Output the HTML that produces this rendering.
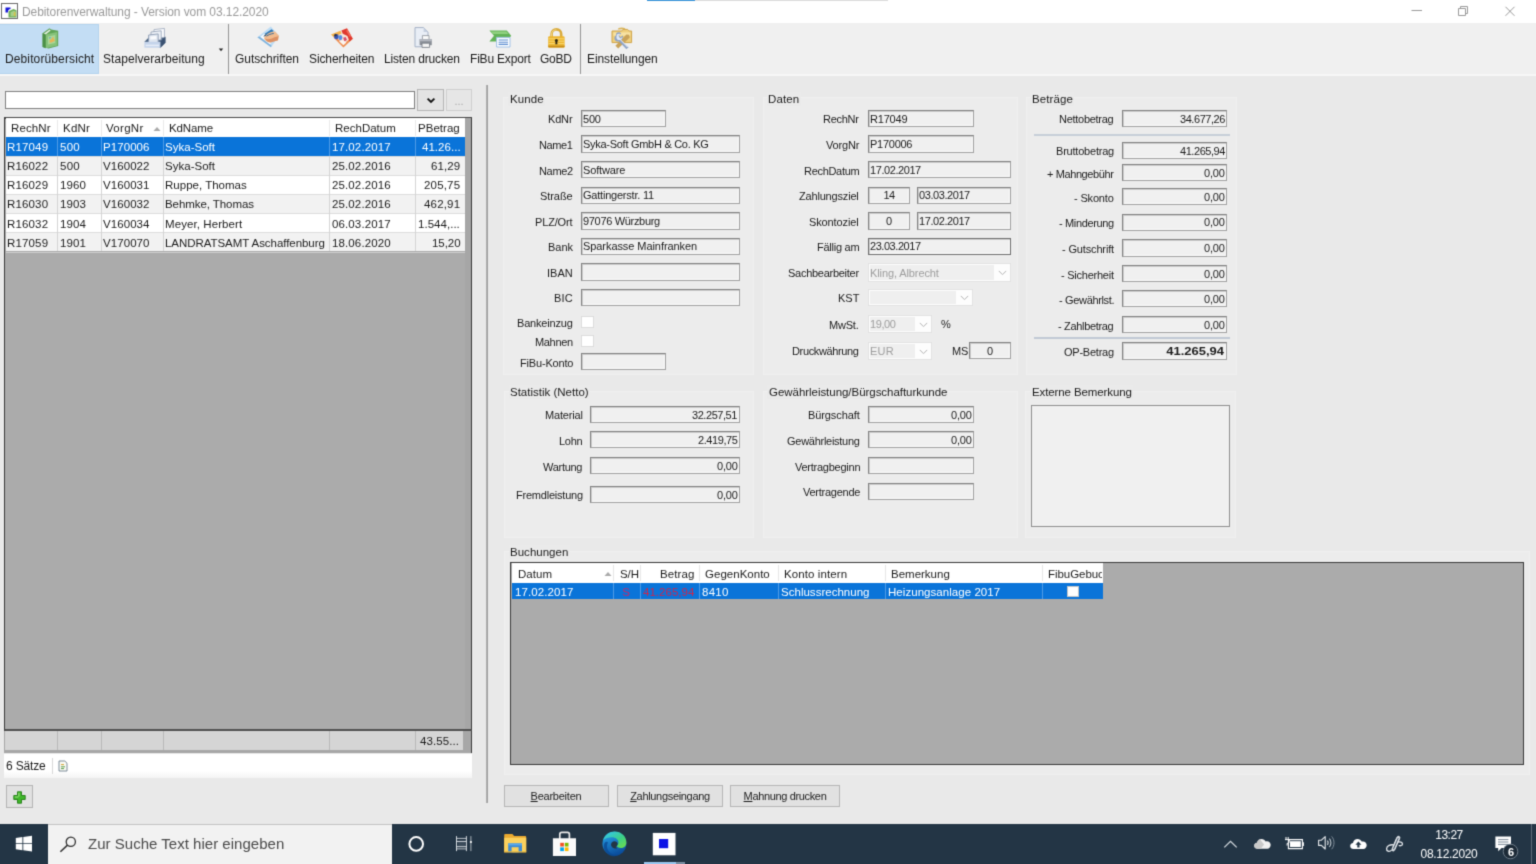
<!DOCTYPE html>
<html lang="de"><head><meta charset="utf-8"><title>Debitorenverwaltung</title>
<style>
html,body{margin:0;padding:0;background:#e9e9e9;overflow:hidden}
body{width:1536px;height:864px;font-family:"Liberation Sans",sans-serif}
#root{filter:url(#soft);box-shadow:0 0 0 4px #e9e9e9;position:relative;width:1536px;height:864px;background:#e9e9e9}
#root div,#root svg{position:absolute;box-sizing:border-box}
.t{will-change:transform;white-space:nowrap;color:#1b1b1b;font-size:11px}
.t span{display:inline-block}
.ui{font-size:12px;color:#1a1a1a}
.ttl{font-size:12px;color:#9a9a9a}
.lg{font-size:11.5px;color:#1b1b1b}
.gh{font-size:11.5px;color:#1b1b1b}
.gc{font-size:11.5px;color:#1b1b1b}
.gs{font-size:11.5px;color:#fff}
.lb{font-size:11px;color:#1b1b1b}
.iv{font-size:11px;color:#1b1b1b}
.dis{font-size:11px;color:#9d9d9d}
.inp{background:#f0f0f0;border:1px solid;border-color:#828282 #a0a0a0 #a0a0a0 #828282;box-shadow:inset 1px 1px 0 #cdcdcd,inset -1px -1px 0 #fafafa}
.cmb{background:#fdfdfd;border:1px solid #e2e2e2}
.cmb i{position:absolute;left:1px;top:1px;bottom:1px;background:#efefef}
.btn{background:#e1e1e1;border:1px solid #b6b6b6}
.grp{border:1px solid #f0f0f0;background:#ececec}
.tb{font-size:15px;color:#4a4a4a}
.tk{font-size:12px;color:#fff}
u{text-decoration:underline}
.bold{font-weight:bold}

</style></head>
<body>
<svg width="0" height="0" style="position:absolute"><defs><filter id="soft" filterUnits="userSpaceOnUse" x="-3" y="-3" width="1542" height="870" color-interpolation-filters="sRGB"><feConvolveMatrix order="3" kernelMatrix="0.02 0.11 0.02 0.11 0.48 0.11 0.02 0.11 0.02" edgeMode="duplicate" preserveAlpha="true"/></filter></defs></svg>
<div id="root">
<div style="left:-3px;top:-3px;width:1542px;height:26px;background:#fff"></div>
<div style="left:647px;top:-3px;width:48px;height:4px;background:#3a94d8"></div>
<div style="left:695px;top:-3px;width:193px;height:4px;background:#dcdcdc"></div>
<svg style="left:1px;top:3px;" width="17" height="16" viewBox="0 0 17 16"><rect x="0.5" y="0.5" width="16" height="15" fill="#fff" stroke="#6a6a6a"/><path d="M4.5 4.5h5v1.5c-1.8 0-2.6 1.2-2.6 3.6h-2.4z" fill="#1414d8"/><path d="M7.5 8.2l5-2.2 3 1.2v7.3h-8z" fill="#6fae5a"/><path d="M9.5 9.2l3.2-1.4 2 0.8v4.6h-5.2z" fill="#a8d08a"/><path d="M12.8 9.2h1.6v3.8h-1.6z" fill="#d8c04a"/></svg>
<div class="t ttl" style="top:3.6px;line-height:16px;height:16px;left:21.8px;"><span id="t1" style="letter-spacing:-0.08px">Debitorenverwaltung - Version vom 03.12.2020</span></div>
<svg style="left:1405px;top:0px;" width="120" height="23" viewBox="0 0 120 23"><path d="M6.5 10.5h10.5" stroke="#9a9a9a" stroke-width="1" fill="none"/><path d="M53.5 8.5h7v7h-7z M55.5 8.5v-2h7v7h-2" stroke="#9a9a9a" stroke-width="1" fill="none"/><path d="M100.5 6.8l9 9 M109.5 6.8l-9 9" stroke="#9a9a9a" stroke-width="1" fill="none"/></svg>
<div style="left:-3px;top:23px;width:1542px;height:51px;background:#f0f0f0"></div>
<div style="left:-3px;top:73.5px;width:1542px;height:2px;background:#f7f7f7"></div>
<div style="left:-3px;top:24px;width:102px;height:49.5px;background:#c3ddf4;border:1px solid #b4d3ee"></div>
<div style="left:228px;top:24px;width:1.2px;height:50px;background:#949494"></div>
<div style="left:579.5px;top:24px;width:1.2px;height:50px;background:#949494"></div>
<div class="t ui" style="top:50.6px;line-height:16px;height:16px;left:4.7px;"><span id="t2" style="letter-spacing:0.12px">Debitorübersicht</span></div>
<div class="t ui" style="top:50.6px;line-height:16px;height:16px;left:103.2px;"><span id="t3" style="letter-spacing:0.06px">Stapelverarbeitung</span></div>
<div class="t ui" style="top:50.6px;line-height:16px;height:16px;left:235.2px;"><span id="t4" style="letter-spacing:-0.06px">Gutschriften</span></div>
<div class="t ui" style="top:50.6px;line-height:16px;height:16px;left:309.2px;"><span id="t5" style="letter-spacing:-0.11px">Sicherheiten</span></div>
<div class="t ui" style="top:50.6px;line-height:16px;height:16px;left:384.2px;"><span id="t6" style="letter-spacing:-0.16px">Listen drucken</span></div>
<div class="t ui" style="top:50.6px;line-height:16px;height:16px;left:470px;"><span id="t7" style="letter-spacing:-0.19px">FiBu Export</span></div>
<div class="t ui" style="top:50.6px;line-height:16px;height:16px;left:540.2px;"><span id="t8" style="letter-spacing:-0.22px">GoBD</span></div>
<div class="t ui" style="top:50.6px;line-height:16px;height:16px;left:587px;"><span id="t9" style="letter-spacing:-0.11px">Einstellungen</span></div>
<svg style="left:217.8px;top:47.6px;" width="6" height="4" viewBox="0 0 6 4"><path d="M0.8 0.6h4.4l-2.2 2.6z" fill="#222"/></svg>
<svg style="left:41px;top:27px;" width="19" height="23" viewBox="0 0 19 23"><path d="M1.6 6.2l6.8-5 1.8 1.4 7 1.2v15.2l-9.6 2.6-6-1.6z" fill="#5fa456"/><path d="M2.8 6.8l5.8-4.2 1 0.9-5 3.9z" fill="#e9f2e4"/><path d="M4.6 7.6l11.6-2.6v13.6l-11.6 2.6z" fill="#86c27a"/><path d="M1.6 6.2l3 1.4v13.6l-3-1.2z" fill="#4b8f46"/><path d="M7 9.6l7.2-1.7v8l-7.2 1.7z" fill="#a9d79a"/><path d="M8.6 12.8l2-.5.8-2 1.4-.3-.2 2.2 1.2.2v1.6l-3.4 1.6-1.8.1z" fill="#e7b458"/><path d="M8 10.4l1.6-.4v1.2l-1.6.4z" fill="#5c9fc4"/></svg>
<svg style="left:143px;top:27px;" width="24" height="22" viewBox="0 0 24 22"><path d="M1.4 14.8l4.600-4.600h16.400v5.600l-5 4.900z" fill="#4c6483"/><path d="M11 2.600l10.400-1.200v9l-10.400 1.200z" fill="#fbfcfe" stroke="#9aa7bb" stroke-width="0.800"/><path d="M8 5l10.200-1.200v9l-10.200 1.200z" fill="#eef2f8" stroke="#8f9db3" stroke-width="0.800"/><path d="M5.600 8l9.600-1.100v8.400l-9.600 1.100z" fill="#dfe6f0" stroke="#8493ab" stroke-width="0.800"/><path d="M7.400 9.600l6-.700v3l-6 .700z" fill="#fafbfd"/><path d="M17.400 14.800l5-5.200v6.200l-5 4.900z" fill="#3a5272"/><path d="M1.400 14.800h16v5.900h-16z" fill="#c4d3ea"/><path d="M2.600 17.600h13.400v1.600h-13.400z" fill="#e6edf8"/></svg>
<svg style="left:256px;top:25px;" width="24" height="23" viewBox="0 0 24 23"><path d="M1.400 12.200l13.400-10.600 8.200 9.400-8 11.200z" fill="#bcdcf5"/><path d="M4.200 12l10.200-7.800 5.600 6.600-6.200 8.600z" fill="#f7fbff"/><path d="M1.400 12.200l13.600 10 .600-1.400-12.200-9.400z" fill="#7fb2dc"/><path d="M8.600 8.800l6.800-4.600 2.400 1.800-6.600 5z" fill="#2f7ab8"/><path d="M7.400 11.800l1.800-2.600 2 1.400z" fill="#1d4566"/><path d="M8 13.200c1-2.600 3.600-4.800 7-6.200l4-.600 4 4.400-1 4.400-7.600 2.200c-2.800 0-5.600-1.800-6.400-4.200z" fill="#f1bb8e"/><path d="M9 13.600c2.600 1 6 .600 9.600-1.400l3.800-1-.400 4-7.600 2.200c-2.400 0-4.600-1.600-5.400-3.800z" fill="#dc9164"/><path d="M10.400 11.200c2-1.400 4.600-2.400 7.400-2.800" stroke="#2a6496" stroke-width="0.900" fill="none"/></svg>
<svg style="left:331px;top:26px;" width="24" height="23" viewBox="0 0 24 23"><path d="M0 8.600l16-6.400 5.800 10.600-9.400 8.700z" fill="#f7e6da"/><path d="M2.600 11.600l9.800 9.900 9.400-8.700-1.200-1.800-8.200 7.400-7.600-7.600z" fill="#ee8d50"/><path d="M0 8.600l9.400-3.800 1.200 2.800-8 3.600z" fill="#f4b24a"/><path d="M10.400 4.400l5.600-2.200 5.800 10.600-3.200 2.800-2.200-5.600-4.600-2.200z" fill="#e0392f"/><path d="M15 4.600l1.600-.600 3.400 6-1.200 1z" fill="#f06a58"/><ellipse cx="5.400" cy="10.600" rx="2.300" ry="2.700" fill="#3556b8"/><ellipse cx="9.400" cy="11.600" rx="2" ry="2.600" fill="#5b8de0"/><path d="M2.600 9.200l2-1.400 1.600 1.200-1.400 1.600z" fill="#30343c"/><path d="M12.200 11.800l2.400-.800 1.400 2.800-2.600 2z" fill="#d84a6a"/><path d="M8 15.200l4.400 4 3-2.800-2.800-1.800z" fill="#fbf5f0"/></svg>
<svg style="left:413px;top:26px;" width="21" height="23" viewBox="0 0 21 23"><path d="M2 1.6h8.6l4.4 4.4v14.8h-13z" fill="#e9eef6" stroke="#a4b1c6" stroke-width="1"/><path d="M10.6 1.6v4.4h4.4z" fill="#c5cfdf"/><path d="M9.4 9.6h6.6v4.4h-6.6z" fill="#fafafa" stroke="#8a8f98" stroke-width="0.8"/><path d="M6.6 13.2h12.2v6h-12.2z" fill="#8b9098"/><path d="M6.6 13.2h12.2v2h-12.2z" fill="#b4b8c0"/><path d="M9 17.2h7.6v4.2h-7.6z" fill="#f4f4f4" stroke="#70757d" stroke-width="0.8"/></svg>
<svg style="left:488px;top:29px;" width="25" height="19" viewBox="0 0 25 19"><path d="M1.4 1.6h17.4l4.4 5.2-4.4 5.6h-17.4l4.6-5.6z" fill="#62b257"/><path d="M2.6 2.4h15.8l2.2 2.6h-15.8z" fill="#8fd07f"/><path d="M8.6 8.4h13.4v9.6h-13.4z" fill="#fdfeff" stroke="#9fc0e6" stroke-width="1"/><path d="M10.6 11h9.4M10.6 13.2h9.4M10.6 15.4h9.4" stroke="#5f8fd2" stroke-width="1.1"/></svg>
<svg style="left:546px;top:27px;" width="21" height="22" viewBox="0 0 21 22"><path d="M5.6 10.4v-3.4c0-2.8 2-4.6 4.8-4.6s4.8 1.8 4.8 4.6v3.4" fill="none" stroke="#d9ab3c" stroke-width="2.6"/><path d="M5.6 10v-3c0-2.600 2-4.200 4.800-4.200" fill="none" stroke="#f3d684" stroke-width="1"/><rect x="2.2" y="9.200" width="16.400" height="11.400" rx="1.200" fill="#edb52e"/><path d="M2.600 11.800h15.600M2.600 14.200h15.600M2.600 16.600h15.600M2.600 19h15.600" stroke="#f8d873" stroke-width="1"/><path d="M2.200 18.600h16.400v1c0 .600-.600 1-1.200 1h-14c-.600 0-1.200-.400-1.200-1z" fill="#c98c12"/><circle cx="10.400" cy="13.600" r="1.500" fill="#2c2410"/><path d="M9.700 14h1.400l.400 3.200h-2.200z" fill="#2c2410"/></svg>
<svg style="left:610px;top:26px;" width="24" height="23" viewBox="0 0 24 23"><path d="M8.6 3.600c0-1.600 6.200-1.600 6.200 0" fill="none" stroke="#d9b45a" stroke-width="1.600"/><path d="M2 5h9.600l1.400-1.600h4.600l1.600 1.600h2.400v11.600h-19.600z" fill="#efcf7c" stroke="#d0a54a" stroke-width="1"/><path d="M3.400 6.400h16.800v3.400h-16.800z" fill="#f7e2a4"/><path d="M5.400 19.800l11-11.400 2.600.400.800 2.600-11.600 11z" fill="#c9a35a"/><path d="M6.200 7.200c1.600-1.400 4-1 5 .400l-2.200 1.800 1.400 1.800 2.400-1.600c.600 1.800-.200 3.800-2 4.400l7.800 7.200-2.200 2-7.400-7.800c-2 .600-3.800-.400-4.400-2.200-.400-1.600.200-3.200 1.600-4z" fill="#8fa3c4"/><path d="M7 8.400c1-.800 2.400-.800 3.200-.200l-1.800 1.600 1.800 2.600 2.200-1.400c0 1.200-.600 2.200-1.600 2.600l7.200 6.800-.800.800-7-7.200c-1.600.400-3-.200-3.600-1.600-.400-1.400 0-2.800.400-4z" fill="#dfe8f6"/></svg>
<div style="left:5px;top:91.2px;width:410px;height:17.4px;background:#fff;border:1px solid #7f7f7f"></div>
<div style="left:417px;top:88.8px;width:27px;height:22.2px;background:#e3e3e3;border:1px solid #b5b5b5"></div>
<svg style="left:425.5px;top:96.5px;" width="10" height="7" viewBox="0 0 10 7"><path d="M1.6 1.6l3.4 3.4 3.4-3.4" stroke="#111" stroke-width="1.9" fill="none"/></svg>
<div style="left:446px;top:88.8px;width:26px;height:22.2px;background:#e6e6e6;border:1px solid #cfcfcf"></div>
<div class="t lb" style="top:92.5px;line-height:16px;height:16px;left:259px;width:400px;text-align:center;color:#a8a8a8"><span id="t10">...</span></div>
<div style="left:485.7px;top:85px;width:2.3px;height:718.3px;background:linear-gradient(90deg,#b4b4b4,#9a9a9a)"></div>
<div style="left:4.1px;top:116.8px;width:467.9px;height:614px;background:#ababab;border:1px solid #3a3a3a;border-top:2px solid #484848;border-bottom:2px solid #505050"></div>
<div style="left:465.4px;top:118.2px;width:5.2px;height:611px;background:#a6a6a6"></div>
<div style="left:4.3px;top:730.8px;width:467.7px;height:22.4px;background:#a7a7a7;border-right:1.5px solid #3a3a3a"></div>
<div style="left:6px;top:118.4px;width:458.5px;height:18.8px;background:#fff"></div>
<div class="t gh" style="top:120.3px;line-height:16px;height:16px;left:11.1px;"><span id="t11" style="letter-spacing:0.1px">RechNr</span></div>
<div class="t gh" style="top:120.3px;line-height:16px;height:16px;left:62.6px;"><span id="t12" style="letter-spacing:0.25px">KdNr</span></div>
<div class="t gh" style="top:120.3px;line-height:16px;height:16px;left:106.2px;"><span id="t13" style="letter-spacing:0.3px">VorgNr</span></div>
<div class="t gh" style="top:120.3px;line-height:16px;height:16px;left:168.9px;"><span id="t14" style="letter-spacing:-0.11px">KdName</span></div>
<div class="t gh" style="top:120.3px;line-height:16px;height:16px;left:335.2px;"><span id="t15" style="letter-spacing:0.01px">RechDatum</span></div>
<div class="t gh" style="top:120.3px;line-height:16px;height:16px;left:418px;"><span id="t16" style="letter-spacing:0.03px">PBetrag</span></div>
<svg style="left:152.5px;top:125.5px;" width="8" height="6" viewBox="0 0 8 6"><path d="M0.5 5l3.5-4 3.5 4z" fill="#a9a9a9"/></svg>
<div style="left:56.5px;top:119.5px;width:1px;height:16.5px;background:#e9e9e9"></div>
<div style="left:100.9px;top:119.5px;width:1px;height:16.5px;background:#e9e9e9"></div>
<div style="left:162.5px;top:119.5px;width:1px;height:16.5px;background:#e9e9e9"></div>
<div style="left:329.3px;top:119.5px;width:1px;height:16.5px;background:#e9e9e9"></div>
<div style="left:414.7px;top:119.5px;width:1px;height:16.5px;background:#e9e9e9"></div>
<div style="left:6px;top:137.2px;width:458.5px;height:19.05px;background:#0a74d9"></div>
<div style="left:56.5px;top:137.2px;width:1px;height:19.05px;background:#4f9be6"></div>
<div style="left:100.9px;top:137.2px;width:1px;height:19.05px;background:#4f9be6"></div>
<div style="left:162.5px;top:137.2px;width:1px;height:19.05px;background:#4f9be6"></div>
<div style="left:329.3px;top:137.2px;width:1px;height:19.05px;background:#4f9be6"></div>
<div style="left:414.7px;top:137.2px;width:1px;height:19.05px;background:#4f9be6"></div>
<div class="t gs" style="top:139.32px;line-height:16px;height:16px;left:7px;"><span id="t17" style="letter-spacing:0.15px">R17049</span></div>
<div class="t gs" style="top:139.32px;line-height:16px;height:16px;left:59.5px;"><span id="t18" style="letter-spacing:0.27px">500</span></div>
<div class="t gs" style="top:139.32px;line-height:16px;height:16px;left:103.2px;"><span id="t19" style="letter-spacing:0.07px">P170006</span></div>
<div class="t gs" style="top:139.32px;line-height:16px;height:16px;left:165.4px;"><span id="t20" style="letter-spacing:0.02px">Syka-Soft</span></div>
<div class="t gs" style="top:139.32px;line-height:16px;height:16px;left:332px;"><span id="t21" style="letter-spacing:0.12px">17.02.2017</span></div>
<div class="t gs" style="top:139.32px;line-height:16px;height:16px;right:1075.7px;"><span id="t22" style="letter-spacing:0.04px">41.26...</span></div>
<div style="left:6px;top:156.25px;width:458.5px;height:19.05px;background:#f2f2f2"></div>
<div style="left:6px;top:156.25px;width:458.5px;height:1px;background:#dcdcdc"></div>
<div style="left:56.5px;top:156.25px;width:1px;height:19.05px;background:#d4d4d4"></div>
<div style="left:100.9px;top:156.25px;width:1px;height:19.05px;background:#d4d4d4"></div>
<div style="left:162.5px;top:156.25px;width:1px;height:19.05px;background:#d4d4d4"></div>
<div style="left:329.3px;top:156.25px;width:1px;height:19.05px;background:#d4d4d4"></div>
<div style="left:414.7px;top:156.25px;width:1px;height:19.05px;background:#d4d4d4"></div>
<div class="t gc" style="top:158.38px;line-height:16px;height:16px;left:7px;"><span id="t23" style="letter-spacing:0.15px">R16022</span></div>
<div class="t gc" style="top:158.38px;line-height:16px;height:16px;left:59.5px;"><span id="t24" style="letter-spacing:0.27px">500</span></div>
<div class="t gc" style="top:158.38px;line-height:16px;height:16px;left:103.2px;"><span id="t25" style="letter-spacing:0.07px">V160022</span></div>
<div class="t gc" style="top:158.38px;line-height:16px;height:16px;left:165.4px;"><span id="t26" style="letter-spacing:0.02px">Syka-Soft</span></div>
<div class="t gc" style="top:158.38px;line-height:16px;height:16px;left:332px;"><span id="t27" style="letter-spacing:0.12px">25.02.2016</span></div>
<div class="t gc" style="top:158.38px;line-height:16px;height:16px;right:1075.7px;"><span id="t28" style="letter-spacing:0.12px">61,29</span></div>
<div style="left:6px;top:175.3px;width:458.5px;height:19.05px;background:#fff"></div>
<div style="left:6px;top:175.3px;width:458.5px;height:1px;background:#dcdcdc"></div>
<div style="left:56.5px;top:175.3px;width:1px;height:19.05px;background:#d4d4d4"></div>
<div style="left:100.9px;top:175.3px;width:1px;height:19.05px;background:#d4d4d4"></div>
<div style="left:162.5px;top:175.3px;width:1px;height:19.05px;background:#d4d4d4"></div>
<div style="left:329.3px;top:175.3px;width:1px;height:19.05px;background:#d4d4d4"></div>
<div style="left:414.7px;top:175.3px;width:1px;height:19.05px;background:#d4d4d4"></div>
<div class="t gc" style="top:177.42px;line-height:16px;height:16px;left:7px;"><span id="t29" style="letter-spacing:0.15px">R16029</span></div>
<div class="t gc" style="top:177.42px;line-height:16px;height:16px;left:59.5px;"><span id="t30" style="letter-spacing:0.1px">1960</span></div>
<div class="t gc" style="top:177.42px;line-height:16px;height:16px;left:103.2px;"><span id="t31" style="letter-spacing:0.07px">V160031</span></div>
<div class="t gc" style="top:177.42px;line-height:16px;height:16px;left:165.4px;"><span id="t32" style="letter-spacing:0.01px">Ruppe, Thomas</span></div>
<div class="t gc" style="top:177.42px;line-height:16px;height:16px;left:332px;"><span id="t33" style="letter-spacing:0.12px">25.02.2016</span></div>
<div class="t gc" style="top:177.42px;line-height:16px;height:16px;right:1075.7px;"><span id="t34" style="letter-spacing:0.17px">205,75</span></div>
<div style="left:6px;top:194.35px;width:458.5px;height:19.05px;background:#f2f2f2"></div>
<div style="left:6px;top:194.35px;width:458.5px;height:1px;background:#dcdcdc"></div>
<div style="left:56.5px;top:194.35px;width:1px;height:19.05px;background:#d4d4d4"></div>
<div style="left:100.9px;top:194.35px;width:1px;height:19.05px;background:#d4d4d4"></div>
<div style="left:162.5px;top:194.35px;width:1px;height:19.05px;background:#d4d4d4"></div>
<div style="left:329.3px;top:194.35px;width:1px;height:19.05px;background:#d4d4d4"></div>
<div style="left:414.7px;top:194.35px;width:1px;height:19.05px;background:#d4d4d4"></div>
<div class="t gc" style="top:196.47px;line-height:16px;height:16px;left:7px;"><span id="t35" style="letter-spacing:0.15px">R16030</span></div>
<div class="t gc" style="top:196.47px;line-height:16px;height:16px;left:59.5px;"><span id="t36" style="letter-spacing:0.1px">1903</span></div>
<div class="t gc" style="top:196.47px;line-height:16px;height:16px;left:103.2px;"><span id="t37" style="letter-spacing:0.07px">V160032</span></div>
<div class="t gc" style="top:196.47px;line-height:16px;height:16px;left:165.4px;"><span id="t38" style="letter-spacing:-0.07px">Behmke, Thomas</span></div>
<div class="t gc" style="top:196.47px;line-height:16px;height:16px;left:332px;"><span id="t39" style="letter-spacing:0.12px">25.02.2016</span></div>
<div class="t gc" style="top:196.47px;line-height:16px;height:16px;right:1075.7px;"><span id="t40" style="letter-spacing:0.17px">462,91</span></div>
<div style="left:6px;top:213.4px;width:458.5px;height:19.05px;background:#fff"></div>
<div style="left:6px;top:213.4px;width:458.5px;height:1px;background:#dcdcdc"></div>
<div style="left:56.5px;top:213.4px;width:1px;height:19.05px;background:#d4d4d4"></div>
<div style="left:100.9px;top:213.4px;width:1px;height:19.05px;background:#d4d4d4"></div>
<div style="left:162.5px;top:213.4px;width:1px;height:19.05px;background:#d4d4d4"></div>
<div style="left:329.3px;top:213.4px;width:1px;height:19.05px;background:#d4d4d4"></div>
<div style="left:414.7px;top:213.4px;width:1px;height:19.05px;background:#d4d4d4"></div>
<div class="t gc" style="top:215.52px;line-height:16px;height:16px;left:7px;"><span id="t41" style="letter-spacing:0.15px">R16032</span></div>
<div class="t gc" style="top:215.52px;line-height:16px;height:16px;left:59.5px;"><span id="t42" style="letter-spacing:0.1px">1904</span></div>
<div class="t gc" style="top:215.52px;line-height:16px;height:16px;left:103.2px;"><span id="t43" style="letter-spacing:0.07px">V160034</span></div>
<div class="t gc" style="top:215.52px;line-height:16px;height:16px;left:165.4px;"><span id="t44" style="letter-spacing:0.08px">Meyer, Herbert</span></div>
<div class="t gc" style="top:215.52px;line-height:16px;height:16px;left:332px;"><span id="t45" style="letter-spacing:0.12px">06.03.2017</span></div>
<div class="t gc" style="top:215.52px;line-height:16px;height:16px;right:1075.7px;"><span id="t46" style="letter-spacing:0.03px">1.544,...</span></div>
<div style="left:6px;top:232.45px;width:458.5px;height:19.05px;background:#f2f2f2"></div>
<div style="left:6px;top:232.45px;width:458.5px;height:1px;background:#dcdcdc"></div>
<div style="left:56.5px;top:232.45px;width:1px;height:19.05px;background:#d4d4d4"></div>
<div style="left:100.9px;top:232.45px;width:1px;height:19.05px;background:#d4d4d4"></div>
<div style="left:162.5px;top:232.45px;width:1px;height:19.05px;background:#d4d4d4"></div>
<div style="left:329.3px;top:232.45px;width:1px;height:19.05px;background:#d4d4d4"></div>
<div style="left:414.7px;top:232.45px;width:1px;height:19.05px;background:#d4d4d4"></div>
<div class="t gc" style="top:234.57px;line-height:16px;height:16px;left:7px;"><span id="t47" style="letter-spacing:0.15px">R17059</span></div>
<div class="t gc" style="top:234.57px;line-height:16px;height:16px;left:59.5px;"><span id="t48" style="letter-spacing:0.1px">1901</span></div>
<div class="t gc" style="top:234.57px;line-height:16px;height:16px;left:103.2px;"><span id="t49" style="letter-spacing:0.07px">V170070</span></div>
<div class="t gc" style="top:234.57px;line-height:16px;height:16px;left:165.4px;"><span id="t50" style="letter-spacing:-0.05px">LANDRATSAMT Aschaffenburg</span></div>
<div class="t gc" style="top:234.57px;line-height:16px;height:16px;left:332px;"><span id="t51" style="letter-spacing:0.12px">18.06.2020</span></div>
<div class="t gc" style="top:234.57px;line-height:16px;height:16px;right:1075.7px;"><span id="t52" style="letter-spacing:-0.04px">15,20</span></div>
<div style="left:6px;top:251.5px;width:458.5px;height:1px;background:#cfcfcf"></div>
<div style="left:4.8px;top:731px;width:458.4px;height:18.9px;background:#d5d5d5"></div>
<div style="left:56.5px;top:731px;width:1px;height:18.9px;background:#b9b9b9"></div>
<div style="left:100.9px;top:731px;width:1px;height:18.9px;background:#b9b9b9"></div>
<div style="left:162.5px;top:731px;width:1px;height:18.9px;background:#b9b9b9"></div>
<div style="left:329.3px;top:731px;width:1px;height:18.9px;background:#b9b9b9"></div>
<div style="left:414.7px;top:731px;width:1px;height:18.9px;background:#b9b9b9"></div>
<div class="t gc" style="top:733.3px;line-height:16px;height:16px;right:1077.2px;"><span id="t53" style="letter-spacing:0.09px">43.55...</span></div>
<div style="left:4px;top:753.5px;width:468px;height:24.5px;background:linear-gradient(#fff 70%,#f4f4f4)"></div>
<div class="t ui" style="top:758px;line-height:16px;height:16px;left:6.2px;"><span id="t54" style="letter-spacing:-0.16px">6 Sätze</span></div>
<div style="left:52px;top:758px;width:1px;height:16px;background:#d8d8d8"></div>
<svg style="left:58px;top:760px;" width="10" height="12" viewBox="0 0 10 12"><path d="M1 1h5.8l2.2 2.2v7.8h-8z" fill="#fbfbf4" stroke="#6d7f8f" stroke-width="0.9"/><path d="M3 6.8h4M3 8.6h3" stroke="#5a9a4a" stroke-width="1"/><path d="M3 4.6h3" stroke="#d0a030" stroke-width="1"/></svg>
<div style="left:6.3px;top:785.3px;width:26.6px;height:22.5px;background:#e1e1e1;border:1px solid #b4b4b4"></div>
<svg style="left:13px;top:791px;" width="13" height="13" viewBox="0 0 13 13"><path d="M4.5 0.8h4v3.7h3.7v4h-3.7v3.7h-4v-3.7h-3.7v-4h3.7z" fill="#3fb62a" stroke="#1f7a12" stroke-width="0.9"/><path d="M5.3 1.8h1.2v3.6h-1.2z M1.8 5.4h3.6v1.1h-3.6z" fill="#9be07f"/></svg>
<div class="grp" style="left:503px;top:96.6px;width:250.5px;height:278.6px;"></div>
<div style="left:508.4px;top:91.8px;width:36.6px;height:14px;background:#eaeaea"></div>
<div class="t lg" style="top:90.8px;line-height:16px;height:16px;left:509.6px;"><span id="t55" style="letter-spacing:0.11px">Kunde</span></div>
<div class="t lb" style="top:111.1px;line-height:16px;height:16px;right:963.4px;"><span id="t56" style="letter-spacing:-0.17px">KdNr</span></div>
<div class="inp" style="left:581px;top:109.9px;width:85.3px;height:16.8px;"></div>
<div class="t iv" style="top:110.6px;line-height:16px;height:16px;left:582.8px;"><span id="t57" style="letter-spacing:-0.19px">500</span></div>
<div class="t lb" style="top:136.75px;line-height:16px;height:16px;right:963.4px;"><span id="t58" style="letter-spacing:-0.37px">Name1</span></div>
<div class="inp" style="left:581px;top:135.3px;width:159px;height:17.3px;"></div>
<div class="t iv" style="top:136.25px;line-height:16px;height:16px;left:582.8px;"><span id="t59" style="letter-spacing:-0.28px">Syka-Soft GmbH &amp; Co. KG</span></div>
<div class="t lb" style="top:162.5px;line-height:16px;height:16px;right:963.4px;"><span id="t60" style="letter-spacing:-0.33px">Name2</span></div>
<div class="inp" style="left:581px;top:161px;width:159px;height:17.4px;"></div>
<div class="t iv" style="top:162px;line-height:16px;height:16px;left:582.8px;"><span id="t61" style="letter-spacing:-0.15px">Software</span></div>
<div class="t lb" style="top:187.9px;line-height:16px;height:16px;right:963.4px;"><span id="t62" style="letter-spacing:-0.07px">Straße</span></div>
<div class="inp" style="left:581px;top:186.5px;width:159px;height:17.2px;"></div>
<div class="t iv" style="top:187.4px;line-height:16px;height:16px;left:582.8px;"><span id="t63" style="letter-spacing:-0.22px">Gattingerstr. 11</span></div>
<div class="t lb" style="top:213.8px;line-height:16px;height:16px;right:963.4px;"><span id="t64" style="letter-spacing:-0.16px">PLZ/Ort</span></div>
<div class="inp" style="left:581px;top:212.4px;width:159px;height:17.2px;"></div>
<div class="t iv" style="top:213.3px;line-height:16px;height:16px;left:582.8px;"><span id="t65" style="letter-spacing:-0.32px">97076 Würzburg</span></div>
<div class="t lb" style="top:238.9px;line-height:16px;height:16px;right:963.4px;"><span id="t66" style="letter-spacing:-0.02px">Bank</span></div>
<div class="inp" style="left:581px;top:237.5px;width:159px;height:17.2px;"></div>
<div class="t iv" style="top:238.4px;line-height:16px;height:16px;left:582.8px;"><span id="t67" style="letter-spacing:-0.07px">Sparkasse Mainfranken</span></div>
<div class="t lb" style="top:264.7px;line-height:16px;height:16px;right:963.4px;"><span id="t68" style="letter-spacing:0.03px">IBAN</span></div>
<div class="inp" style="left:581px;top:263.2px;width:159px;height:17.4px;"></div>
<div class="t lb" style="top:290.4px;line-height:16px;height:16px;right:963.4px;"><span id="t69" style="letter-spacing:0.15px">BIC</span></div>
<div class="inp" style="left:581px;top:289px;width:159px;height:17.2px;"></div>
<div class="t lb" style="top:315px;line-height:16px;height:16px;right:963px;"><span id="t70" style="letter-spacing:-0.19px">Bankeinzug</span></div>
<div style="left:581.3px;top:316.2px;width:12.3px;height:12.3px;background:#fff;border:1px solid #dcdcdc"></div>
<div class="t lb" style="top:334px;line-height:16px;height:16px;right:963px;"><span id="t71" style="letter-spacing:-0.33px">Mahnen</span></div>
<div style="left:581.3px;top:335.2px;width:12.3px;height:12.3px;background:#fff;border:1px solid #dcdcdc"></div>
<div class="t lb" style="top:354.6px;line-height:16px;height:16px;right:962.6px;"><span id="t72" style="letter-spacing:-0.18px">FiBu-Konto</span></div>
<div class="inp" style="left:581px;top:353.1px;width:85.3px;height:17.2px;"></div>
<div class="grp" style="left:763px;top:96.6px;width:255px;height:278.6px;"></div>
<div style="left:767.2px;top:91.8px;width:34px;height:14px;background:#eaeaea"></div>
<div class="t lg" style="top:90.8px;line-height:16px;height:16px;left:768.4px;"><span id="t73" style="letter-spacing:0.1px">Daten</span></div>
<div class="t lb" style="top:111.4px;line-height:16px;height:16px;right:677px;"><span id="t74" style="letter-spacing:-0.28px">RechNr</span></div>
<div class="t lb" style="top:137px;line-height:16px;height:16px;right:677px;"><span id="t75" style="letter-spacing:-0.14px">VorgNr</span></div>
<div class="t lb" style="top:162.6px;line-height:16px;height:16px;right:677px;"><span id="t76" style="letter-spacing:-0.3px">RechDatum</span></div>
<div class="t lb" style="top:188.2px;line-height:16px;height:16px;right:677px;"><span id="t77" style="letter-spacing:-0.18px">Zahlungsziel</span></div>
<div class="t lb" style="top:213.8px;line-height:16px;height:16px;right:677px;"><span id="t78" style="letter-spacing:-0.12px">Skontoziel</span></div>
<div class="t lb" style="top:239.4px;line-height:16px;height:16px;right:677px;"><span id="t79" style="letter-spacing:-0.25px">Fällig am</span></div>
<div class="t lb" style="top:265.2px;line-height:16px;height:16px;right:677px;"><span id="t80" style="letter-spacing:-0.27px">Sachbearbeiter</span></div>
<div class="t lb" style="top:290.4px;line-height:16px;height:16px;right:677px;"><span id="t81" style="letter-spacing:-0px">KST</span></div>
<div class="t lb" style="top:316.6px;line-height:16px;height:16px;right:677px;"><span id="t82" style="letter-spacing:-0.19px">MwSt.</span></div>
<div class="t lb" style="top:342.8px;line-height:16px;height:16px;right:677px;"><span id="t83" style="letter-spacing:-0.36px">Druckwährung</span></div>
<div class="inp" style="left:868px;top:109.9px;width:105.8px;height:16.8px;"></div>
<div class="t iv" style="top:110.6px;line-height:16px;height:16px;left:869.8px;"><span id="t84" style="letter-spacing:-0.19px">R17049</span></div>
<div class="inp" style="left:868px;top:135.3px;width:105.8px;height:17.3px;"></div>
<div class="t iv" style="top:136.25px;line-height:16px;height:16px;left:869.8px;"><span id="t85" style="letter-spacing:-0.26px">P170006</span></div>
<div class="inp" style="left:868px;top:161px;width:143px;height:17.4px;"></div>
<div class="t iv" style="top:162px;line-height:16px;height:16px;left:869.8px;"><span id="t86" style="letter-spacing:-0.43px">17.02.2017</span></div>
<div class="inp" style="left:868px;top:186.5px;width:41.7px;height:17.2px;"></div>
<div class="t iv" style="top:187.4px;line-height:16px;height:16px;left:688.85px;width:400px;text-align:center;"><span id="t87" style="letter-spacing:-0.5px">14</span></div>
<div class="inp" style="left:917.3px;top:186.5px;width:93.7px;height:17.2px;"></div>
<div class="t iv" style="top:187.4px;line-height:16px;height:16px;left:919.1px;"><span id="t88" style="letter-spacing:-0.43px">03.03.2017</span></div>
<div class="inp" style="left:868px;top:212.4px;width:41.7px;height:17.2px;"></div>
<div class="t iv" style="top:213.3px;line-height:16px;height:16px;left:688.85px;width:400px;text-align:center;"><span id="t89">0</span></div>
<div class="inp" style="left:917.3px;top:212.4px;width:93.7px;height:17.2px;"></div>
<div class="t iv" style="top:213.3px;line-height:16px;height:16px;left:919.1px;"><span id="t90" style="letter-spacing:-0.43px">17.02.2017</span></div>
<div class="inp" style="left:868px;top:237.5px;width:143px;height:17.2px;border-color:#6f6f6f;"></div>
<div class="t iv" style="top:238.4px;line-height:16px;height:16px;left:869.8px;"><span id="t91" style="letter-spacing:-0.45px">23.03.2017</span></div>
<div class="cmb" style="left:868.4px;top:263.3px;width:142.2px;height:18.3px;"><i style="width:123.2px"></i></div>
<svg style="left:997.6px;top:269.95px;" width="9" height="6" viewBox="0 0 9 6"><path d="M0.8 0.9l3.7 3.7 3.7-3.7" stroke="#b5b5b5" stroke-width="1" fill="none"/></svg>
<div class="t dis" style="top:264.65px;line-height:16px;height:16px;left:870px;"><span id="t92" style="letter-spacing:-0.1px">Kling, Albrecht</span></div>
<div class="cmb" style="left:868.4px;top:288.6px;width:105px;height:17.2px;"><i style="width:86px"></i></div>
<svg style="left:960.4px;top:294.7px;" width="9" height="6" viewBox="0 0 9 6"><path d="M0.8 0.9l3.7 3.7 3.7-3.7" stroke="#b5b5b5" stroke-width="1" fill="none"/></svg>
<div class="cmb" style="left:868.4px;top:315px;width:63.2px;height:18.4px;"><i style="width:44.2px"></i></div>
<svg style="left:918.6px;top:321.7px;" width="9" height="6" viewBox="0 0 9 6"><path d="M0.8 0.9l3.7 3.7 3.7-3.7" stroke="#b5b5b5" stroke-width="1" fill="none"/></svg>
<div class="t dis" style="top:316.4px;line-height:16px;height:16px;left:870px;"><span id="t93" style="letter-spacing:-0.39px">19,00</span></div>
<div class="t lb" style="top:316.4px;line-height:16px;height:16px;left:941.2px;"><span id="t94">%</span></div>
<div class="cmb" style="left:868.4px;top:342px;width:63.2px;height:18.3px;"><i style="width:44.2px"></i></div>
<svg style="left:918.6px;top:348.65px;" width="9" height="6" viewBox="0 0 9 6"><path d="M0.8 0.9l3.7 3.7 3.7-3.7" stroke="#b5b5b5" stroke-width="1" fill="none"/></svg>
<div class="t dis" style="top:343.35px;line-height:16px;height:16px;left:870px;"><span id="t95" style="letter-spacing:0.26px">EUR</span></div>
<div class="t lb" style="top:343px;line-height:16px;height:16px;left:951.6px;"><span id="t96" style="letter-spacing:-0.15px">MS</span></div>
<div class="inp" style="left:969.4px;top:341.7px;width:41.6px;height:17.2px;"></div>
<div class="t iv" style="top:342.6px;line-height:16px;height:16px;left:790.2px;width:400px;text-align:center;"><span id="t97">0</span></div>
<div class="grp" style="left:1025.6px;top:96.6px;width:211.2px;height:278.6px;"></div>
<div style="left:1030.3px;top:91.8px;width:43.8px;height:14px;background:#eaeaea"></div>
<div class="t lg" style="top:90.8px;line-height:16px;height:16px;left:1031.5px;"><span id="t98" style="letter-spacing:0.1px">Beträge</span></div>
<div class="t lb" style="top:111px;line-height:16px;height:16px;right:422.2px;"><span id="t99" style="letter-spacing:-0.28px">Nettobetrag</span></div>
<div class="inp" style="left:1121.5px;top:109.6px;width:105.7px;height:17.2px;"></div>
<div class="t iv" style="top:110.5px;line-height:16px;height:16px;right:311.4px;"><span id="t100" style="letter-spacing:-0.44px">34.677,26</span></div>
<div class="t lb" style="top:143.1px;line-height:16px;height:16px;right:422.2px;"><span id="t101" style="letter-spacing:-0.21px">Bruttobetrag</span></div>
<div class="inp" style="left:1121.5px;top:141.7px;width:105.7px;height:17.2px;"></div>
<div class="t iv" style="top:142.6px;line-height:16px;height:16px;right:311.4px;"><span id="t102" style="letter-spacing:-0.44px">41.265,94</span></div>
<div class="t lb" style="top:165.6px;line-height:16px;height:16px;right:422.2px;"><span id="t103" style="letter-spacing:-0.4px">+ Mahngebühr</span></div>
<div class="inp" style="left:1121.5px;top:164.2px;width:105.7px;height:17.2px;"></div>
<div class="t iv" style="top:165.1px;line-height:16px;height:16px;right:311.4px;"><span id="t104" style="letter-spacing:-0.2px">0,00</span></div>
<div class="t lb" style="top:189.7px;line-height:16px;height:16px;right:422.2px;"><span id="t105" style="letter-spacing:-0.17px">- Skonto</span></div>
<div class="inp" style="left:1121.5px;top:188.3px;width:105.7px;height:17.2px;"></div>
<div class="t iv" style="top:189.2px;line-height:16px;height:16px;right:311.4px;"><span id="t106" style="letter-spacing:-0.2px">0,00</span></div>
<div class="t lb" style="top:214.9px;line-height:16px;height:16px;right:422.2px;"><span id="t107" style="letter-spacing:-0.35px">- Minderung</span></div>
<div class="inp" style="left:1121.5px;top:213.6px;width:105.7px;height:17px;"></div>
<div class="t iv" style="top:214.4px;line-height:16px;height:16px;right:311.4px;"><span id="t108" style="letter-spacing:-0.2px">0,00</span></div>
<div class="t lb" style="top:240.8px;line-height:16px;height:16px;right:422.2px;"><span id="t109" style="letter-spacing:-0.15px">- Gutschrift</span></div>
<div class="inp" style="left:1121.5px;top:239.3px;width:105.7px;height:17.4px;"></div>
<div class="t iv" style="top:240.3px;line-height:16px;height:16px;right:311.4px;"><span id="t110" style="letter-spacing:-0.2px">0,00</span></div>
<div class="t lb" style="top:266.65px;line-height:16px;height:16px;right:422.2px;"><span id="t111" style="letter-spacing:-0.24px">- Sicherheit</span></div>
<div class="inp" style="left:1121.5px;top:265.2px;width:105.7px;height:17.3px;"></div>
<div class="t iv" style="top:266.15px;line-height:16px;height:16px;right:311.4px;"><span id="t112" style="letter-spacing:-0.2px">0,00</span></div>
<div class="t lb" style="top:291.7px;line-height:16px;height:16px;right:422.2px;"><span id="t113" style="letter-spacing:-0.34px">- Gewährlst.</span></div>
<div class="inp" style="left:1121.5px;top:290.3px;width:105.7px;height:17.2px;"></div>
<div class="t iv" style="top:291.2px;line-height:16px;height:16px;right:311.4px;"><span id="t114" style="letter-spacing:-0.2px">0,00</span></div>
<div class="t lb" style="top:317.65px;line-height:16px;height:16px;right:422.2px;"><span id="t115" style="letter-spacing:-0.33px">- Zahlbetrag</span></div>
<div class="inp" style="left:1121.5px;top:316.2px;width:105.7px;height:17.3px;"></div>
<div class="t iv" style="top:317.15px;line-height:16px;height:16px;right:311.4px;"><span id="t116" style="letter-spacing:-0.2px">0,00</span></div>
<div class="t lb" style="top:343.5px;line-height:16px;height:16px;right:422.2px;"><span id="t117" style="letter-spacing:-0.24px">OP-Betrag</span></div>
<div class="inp" style="left:1121.5px;top:341.7px;width:105.7px;height:18px;"></div>
<div class="t iv bold" style="top:343px;line-height:16px;height:16px;right:311.6px;transform:scaleX(1.18);transform-origin:right center;"><span id="t118">41.265,94</span></div>
<div style="left:1034px;top:133.7px;width:195.8px;height:2px;background:#c6ced8"></div>
<div style="left:1034px;top:336.6px;width:195.8px;height:2px;background:#c0c9d4"></div>
<div class="grp" style="left:503.6px;top:391.2px;width:250.4px;height:146.6px;"></div>
<div style="left:508.6px;top:385.2px;width:81.4px;height:14px;background:#eaeaea"></div>
<div class="t lg" style="top:384.2px;line-height:16px;height:16px;left:509.8px;"><span id="t119" style="letter-spacing:-0px">Statistik (Netto)</span></div>
<div class="t lb" style="top:407.35px;line-height:16px;height:16px;right:953.6px;"><span id="t120" style="letter-spacing:-0.17px">Material</span></div>
<div class="inp" style="left:590.4px;top:406.1px;width:149.4px;height:16.9px;"></div>
<div class="t iv" style="top:406.85px;line-height:16px;height:16px;right:798.8px;"><span id="t121" style="letter-spacing:-0.44px">32.257,51</span></div>
<div class="t lb" style="top:432.65px;line-height:16px;height:16px;right:953.6px;"><span id="t122" style="letter-spacing:-0.27px">Lohn</span></div>
<div class="inp" style="left:590.4px;top:431.3px;width:149.4px;height:17.1px;"></div>
<div class="t iv" style="top:432.15px;line-height:16px;height:16px;right:798.8px;"><span id="t123" style="letter-spacing:-0.43px">2.419,75</span></div>
<div class="t lb" style="top:458.55px;line-height:16px;height:16px;right:953.6px;"><span id="t124" style="letter-spacing:-0.28px">Wartung</span></div>
<div class="inp" style="left:590.4px;top:457.3px;width:149.4px;height:16.9px;"></div>
<div class="t iv" style="top:458.05px;line-height:16px;height:16px;right:798.8px;"><span id="t125" style="letter-spacing:-0.2px">0,00</span></div>
<div class="t lb" style="top:487.15px;line-height:16px;height:16px;right:953.6px;"><span id="t126" style="letter-spacing:-0.22px">Fremdleistung</span></div>
<div class="inp" style="left:590.4px;top:485.9px;width:149.4px;height:16.9px;"></div>
<div class="t iv" style="top:486.65px;line-height:16px;height:16px;right:798.8px;"><span id="t127" style="letter-spacing:-0.2px">0,00</span></div>
<div class="grp" style="left:763.4px;top:391.2px;width:254.6px;height:146.6px;"></div>
<div style="left:767.4px;top:385.2px;width:181px;height:14px;background:#eaeaea"></div>
<div class="t lg" style="top:384.2px;line-height:16px;height:16px;left:768.6px;"><span id="t128" style="letter-spacing:-0.04px">Gewährleistung/Bürgschafturkunde</span></div>
<div class="t lb" style="top:407.35px;line-height:16px;height:16px;right:676px;"><span id="t129" style="letter-spacing:-0.1px">Bürgschaft</span></div>
<div class="inp" style="left:868.2px;top:406.1px;width:105.6px;height:16.9px;"></div>
<div class="t iv" style="top:406.85px;line-height:16px;height:16px;right:564.8px;"><span id="t130" style="letter-spacing:-0.2px">0,00</span></div>
<div class="t lb" style="top:432.65px;line-height:16px;height:16px;right:676px;"><span id="t131" style="letter-spacing:-0.27px">Gewährleistung</span></div>
<div class="inp" style="left:868.2px;top:431.3px;width:105.6px;height:17.1px;"></div>
<div class="t iv" style="top:432.15px;line-height:16px;height:16px;right:564.8px;"><span id="t132" style="letter-spacing:-0.2px">0,00</span></div>
<div class="t lb" style="top:458.55px;line-height:16px;height:16px;right:676px;"><span id="t133" style="letter-spacing:-0.25px">Vertragbeginn</span></div>
<div class="inp" style="left:868.2px;top:457.3px;width:105.6px;height:16.9px;"></div>
<div class="t lb" style="top:483.85px;line-height:16px;height:16px;right:676px;"><span id="t134" style="letter-spacing:-0.25px">Vertragende</span></div>
<div class="inp" style="left:868.2px;top:482.5px;width:105.6px;height:17.1px;"></div>
<div class="grp" style="left:1025.4px;top:391.2px;width:210.8px;height:146.6px;"></div>
<div style="left:1030.3px;top:385.2px;width:102.6px;height:14px;background:#eaeaea"></div>
<div class="t lg" style="top:384.2px;line-height:16px;height:16px;left:1031.5px;"><span id="t135" style="letter-spacing:-0.11px">Externe Bemerkung</span></div>
<div style="left:1031.3px;top:405px;width:198.8px;height:122px;background:#f0f0f0;border:1px solid #8e8e8e"></div>
<div class="grp" style="left:503.6px;top:550.6px;width:1026.4px;height:224.6px;"></div>
<div style="left:508.6px;top:544.6px;width:61.2px;height:14px;background:#eaeaea"></div>
<div class="t lg" style="top:543.6px;line-height:16px;height:16px;left:509.8px;"><span id="t136" style="letter-spacing:0.02px">Buchungen</span></div>
<div style="left:510.2px;top:561.6px;width:1013.8px;height:203.8px;background:#ababab;border:1.3px solid #3a3a3a"></div>
<div style="left:511.5px;top:562.9px;width:591.1px;height:20.2px;background:#fff"></div>
<div style="left:511.5px;top:583px;width:591.1px;height:16.2px;background:#0a74d9"></div>
<div style="left:613.1px;top:564.5px;width:1px;height:16.5px;background:#e6e6e6"></div>
<div style="left:613.1px;top:583px;width:1px;height:16.2px;background:#4f9be6"></div>
<div style="left:639.7px;top:564.5px;width:1px;height:16.5px;background:#e6e6e6"></div>
<div style="left:639.7px;top:583px;width:1px;height:16.2px;background:#4f9be6"></div>
<div style="left:698.6px;top:564.5px;width:1px;height:16.5px;background:#e6e6e6"></div>
<div style="left:698.6px;top:583px;width:1px;height:16.2px;background:#4f9be6"></div>
<div style="left:777.8px;top:564.5px;width:1px;height:16.5px;background:#e6e6e6"></div>
<div style="left:777.8px;top:583px;width:1px;height:16.2px;background:#4f9be6"></div>
<div style="left:885.3px;top:564.5px;width:1px;height:16.5px;background:#e6e6e6"></div>
<div style="left:885.3px;top:583px;width:1px;height:16.2px;background:#4f9be6"></div>
<div style="left:1041.9px;top:564.5px;width:1px;height:16.5px;background:#e6e6e6"></div>
<div style="left:1041.9px;top:583px;width:1px;height:16.2px;background:#4f9be6"></div>
<div class="t gh" style="top:565.6px;line-height:16px;height:16px;left:517.7px;"><span id="t137" style="letter-spacing:0.07px">Datum</span></div>
<svg style="left:603.8px;top:571px;" width="8" height="6" viewBox="0 0 8 6"><path d="M0.5 5l3.5-4 3.5 4z" fill="#a9a9a9"/></svg>
<div class="t gh" style="top:565.6px;line-height:16px;height:16px;left:619.6px;"><span id="t138" style="letter-spacing:-0.06px">S/H</span></div>
<div class="t gh" style="top:565.6px;line-height:16px;height:16px;right:841.8px;"><span id="t139" style="letter-spacing:0.09px">Betrag</span></div>
<div class="t gh" style="top:565.6px;line-height:16px;height:16px;left:705.2px;"><span id="t140" style="letter-spacing:0.02px">GegenKonto</span></div>
<div class="t gh" style="top:565.6px;line-height:16px;height:16px;left:784.2px;"><span id="t141" style="letter-spacing:0.1px">Konto intern</span></div>
<div class="t gh" style="top:565.6px;line-height:16px;height:16px;left:891.2px;"><span id="t142" style="letter-spacing:-0px">Bemerkung</span></div>
<div style="left:1044px;top:563.2px;width:57.6px;height:19.2px;overflow:hidden"><div class="t gh" style="left:4.3px;top:2.4px;line-height:16px;height:16px"><span style="letter-spacing:-0.05px">FibuGebuc</span></div></div>
<div class="t gs" style="top:583.6px;line-height:16px;height:16px;left:514.6px;"><span id="t143" style="letter-spacing:0.1px">17.02.2017</span></div>
<div class="t gs" style="top:583.6px;line-height:16px;height:16px;left:426.2px;width:400px;text-align:center;color:#c22a6a"><span id="t144">S</span></div>
<div class="t gs" style="top:583.6px;line-height:16px;height:16px;right:841.8px;color:#c8284f"><span id="t145" style="letter-spacing:0.03px">41.265,94</span></div>
<div class="t gs" style="top:583.6px;line-height:16px;height:16px;left:701.9px;"><span id="t146" style="letter-spacing:0.25px">8410</span></div>
<div class="t gs" style="top:583.6px;line-height:16px;height:16px;left:780.9px;"><span id="t147" style="letter-spacing:0.02px">Schlussrechnung</span></div>
<div class="t gs" style="top:583.6px;line-height:16px;height:16px;left:888px;"><span id="t148" style="letter-spacing:0.05px">Heizungsanlage 2017</span></div>
<div style="left:1066.5px;top:585.8px;width:12.2px;height:11.2px;background:#fff;border:1px solid #c6c6c6"></div>
<div class="btn" style="left:503.8px;top:785px;width:105px;height:21.8px;"></div>
<div class="t lb" style="top:787.5px;line-height:16px;height:16px;left:356.3px;width:400px;text-align:center;"><span id="t149" style="letter-spacing:-0.24px"><u>B</u>earbeiten</span></div>
<div class="btn" style="left:617px;top:785px;width:105.6px;height:21.8px;"></div>
<div class="t lb" style="top:787.5px;line-height:16px;height:16px;left:469.8px;width:400px;text-align:center;"><span id="t150" style="letter-spacing:-0.32px"><u>Z</u>ahlungseingang</span></div>
<div class="btn" style="left:730.4px;top:785px;width:109.6px;height:21.8px;"></div>
<div class="t lb" style="top:787.5px;line-height:16px;height:16px;left:585.2px;width:400px;text-align:center;"><span id="t151" style="letter-spacing:-0.35px"><u>M</u>ahnung drucken</span></div>
<div style="left:-3px;top:824px;width:1542px;height:43px;background:#233545"></div>
<div style="left:48px;top:824px;width:344px;height:43px;background:#f2f2f2;border-top:1px solid #c4c4c4"></div>
<svg style="left:15px;top:835px;" width="18" height="18" viewBox="0 0 18 18"><path d="M0.8 3.1l6.6-1v6.1h-6.6z M8.3 2l8.7-1.300v7.500h-8.700z M0.800 9.100h6.600v6.100l-6.600-1z M8.300 9.100h8.700v7.500l-8.700-1.300z" fill="#fff"/></svg>
<svg style="left:58px;top:834px;" width="22" height="20" viewBox="0 0 22 20"><circle cx="12.800" cy="7.700" r="4.600" fill="none" stroke="#2e2e2e" stroke-width="1.300"/><path d="M9.500 11.100l-7.100 6.600" stroke="#2e2e2e" stroke-width="1.500" fill="none"/></svg>
<div class="t tb" style="top:834.3px;line-height:20px;height:20px;left:87.6px;"><span id="t152" style="letter-spacing:0.02px">Zur Suche Text hier eingeben</span></div>
<svg style="left:406px;top:834px;" width="20" height="20" viewBox="0 0 20 20"><circle cx="10.200" cy="9.900" r="6.800" fill="none" stroke="#fff" stroke-width="2"/></svg>
<svg style="left:454px;top:834px;" width="20" height="19" viewBox="0 0 20 19"><path d="M4 7.500h7v5.100h-7z" fill="#3b4b5a"/><path d="M2.500 2.100v15 M12.400 2.100v15" stroke="#e8ecef" stroke-width="0.900"/><path d="M2.500 4.400h9.900 M2.500 14.900h9.900" stroke="#dde2e6" stroke-width="0.800"/><path d="M2.500 7.400h9.900 M2.500 12.700h9.900" stroke="#e8ecef" stroke-width="0.900"/><path d="M16.900 2.100v15" stroke="#c9d0d6" stroke-width="0.800"/><circle cx="16.900" cy="8" r="1.100" fill="#fff"/></svg>
<svg style="left:503px;top:833px;" width="25" height="21" viewBox="0 0 25 21"><path d="M1.200 2.200c0-.800.500-1.300 1.200-1.300h7l1.800 2h10.800c.800 0 1.200.500 1.200 1.200v15.100h-22z" fill="#eaa92f"/><path d="M1.200 4.800h22v14.400h-22z" fill="#fbd15d"/><path d="M5.200 10.400h13.800v8.800h-13.800z" fill="#3d8bd4"/><path d="M5.200 10.400h13.800v2h-13.800z" fill="#5aa9ea"/><path d="M8.600 14.200h7v5h-7z" fill="#fbd15d"/><path d="M1.200 18.200h22v1h-22z" fill="#e9b73e"/></svg>
<svg style="left:551px;top:831px;" width="27" height="26" viewBox="0 0 27 26"><path d="M8.800 8v-4.600c0-1.200.800-2 2-2h5.600c1.200 0 2 .800 2 2v4.600" fill="none" stroke="#e9e9e9" stroke-width="1.700"/><path d="M1.900 7.200h23.100v17.700h-23.100z" fill="#fafafa"/><path d="M9.200 11.800h3.700v3.700h-3.700z" fill="#f25022"/><path d="M13.800 11.800h3.700v3.700h-3.700z" fill="#7fba00"/><path d="M9.200 16.400h3.700v3.700h-3.700z" fill="#00a4ef"/><path d="M13.800 16.400h3.700v3.700h-3.700z" fill="#ffb900"/></svg>
<svg style="left:601px;top:831px;" width="27" height="26" viewBox="0 0 27 26"><defs><linearGradient id="eg1" x1="0.200" y1="0" x2="1" y2="0.900"><stop offset="0" stop-color="#35c6e8"/><stop offset="0.550" stop-color="#3ccf86"/><stop offset="1" stop-color="#6ddc4e"/></linearGradient><linearGradient id="eg2" x1="0" y1="0" x2="0.400" y2="1"><stop offset="0" stop-color="#2aa9ee"/><stop offset="1" stop-color="#0b4f9e"/></linearGradient></defs><circle cx="13.400" cy="12.700" r="12" fill="url(#eg2)"/><path d="M2.200 9.200c1.600-5.400 6.200-8.600 11.400-8.600 6.800 0 11.800 5 11.800 10.800 0 3.600-2.600 5.600-5.600 5.600-2.400 0-4-.900-4.200-2.400 1.200-.600 1.800-1.800 1.800-3.200 0-3-3-5.200-6.400-5.200-3.800 0-7 1.200-8.800 3z" fill="url(#eg1)"/><path d="M10.800 11.400c1.400-1.200 3.400-1.400 4.800-.400 1.200.900 1.400 2.400.600 3.400-.500.700-1.200.900-1 1.800.100.500.500.900 1.200 1.200-2.200.600-4.600-.200-5.800-2-.800-1.300-.700-2.900.200-4z" fill="#233545"/><path d="M7 11.400c-2.400 4-.600 9.600 4.400 11.800 2.800 1.200 6 .800 8.400-.600-2.800 3-8 3.600-12 1.200-4.200-2.600-5.800-7.400-4.400-11.600 1-1.400 2.400-1.800 3.600-.800z" fill="#0a4a94" opacity="0.800"/></svg>
<svg style="left:652px;top:832px;" width="25" height="24" viewBox="0 0 25 24"><path d="M0.800 0.900h22.700v22.400h-22.700z" fill="#fff"/><path d="M7 7h9.200v9.200h-9.200z" fill="#0a12e6"/></svg>
<div style="left:644.3px;top:861.6px;width:31.3px;height:6px;background:#9cc7ee"></div>
<div style="left:676.4px;top:861.6px;width:8.4px;height:6px;background:#7b8fa3"></div>
<svg style="left:1222px;top:838px;" width="17" height="12" viewBox="0 0 17 12"><path d="M2.300 9.400l6.200-6 6.200 6" stroke="#d5dbe0" stroke-width="1.200" fill="none"/></svg>
<svg style="left:1253px;top:836px;" width="20" height="15" viewBox="0 0 20 15"><path d="M4.600 12.800c-2 0-3.400-1.300-3.400-3 0-1.600 1.200-2.900 2.800-3 .400-2.300 2.300-3.900 4.600-3.900 1.800 0 3.300 1 4.100 2.500.400-.150.800-.200 1.300-.200 2 0 3.600 1.600 3.700 3.600 0 2.200-1.400 4-3.400 4z" fill="#f1f1f1"/><path d="M4.600 12.800c-2 0-3.400-1.300-3.400-3 0-1.600 1.200-2.900 2.800-3 .300-1.700 1.400-3 2.900-3.600l4.200 5.400-3.400 4.200z" fill="#c9c9c9"/></svg>
<svg style="left:1285px;top:836px;" width="20" height="15" viewBox="0 0 20 15"><path d="M3.400 3.600h14v9h-14z" fill="none" stroke="#fff" stroke-width="1.100"/><path d="M5 5.200h10.800v5.800h-10.800z" fill="#fff"/><path d="M17.600 6.200h1.300v3.800h-1.300z" fill="#fff"/><path d="M1 1v2.600M3.200 1v2.600M0 3.600h4.200v2c0 1.400-1 1.800-2.100 1.800v2.200" stroke="#fff" stroke-width="1" fill="none"/></svg>
<svg style="left:1317px;top:833px;" width="20" height="20" viewBox="0 0 20 20"><path d="M1.600 7.200h2.800l3.800-3.600v12.400l-3.800-3.600h-2.800z" fill="none" stroke="#e6e9ec" stroke-width="1.100" stroke-linejoin="round"/><path d="M10.400 7.600c.900.900.900 3.300 0 4.300" stroke="#e6e9ec" stroke-width="1.100" fill="none"/><path d="M12.400 5.600c2 2.200 2 6.200 0 8.400" stroke="#c0c8cf" stroke-width="1.100" fill="none"/><path d="M14.600 3.400c3.200 3.400 3.200 9.400 0 12.800" stroke="#7f8d99" stroke-width="1" fill="none"/></svg>
<svg style="left:1349px;top:836px;" width="20" height="15" viewBox="0 0 20 15"><path d="M4.600 13c-2 0-3.400-1.300-3.400-3 0-1.600 1.200-2.900 2.800-3 .400-2.300 2.300-3.900 4.600-3.900 1.800 0 3.300 1 4.100 2.500.400-.150.800-.200 1.300-.200 2 0 3.600 1.600 3.700 3.600 0 2.200-1.400 4-3.400 4z" fill="#fff"/><path d="M9.400 5.600l3 3.200h-1.900v2.800h-2.200v-2.800h-1.900z" fill="#233545"/></svg>
<svg style="left:1385px;top:835px;" width="20" height="19" viewBox="0 0 20 19"><path d="M13 1.400c1.300-.400 2.200.700 1.700 2l-4.900 11.300c-.600 1.400-2.400 1.800-2.800.500-.200-.800.200-1.700.600-2.700l3.900-9.300c.300-.900.800-1.500 1.500-1.800z" fill="#c9d2da" stroke="#eef1f4" stroke-width="1"/><path d="M13.200 3.200l-4.800 11" stroke="#233545" stroke-width="0.800" fill="none"/><path d="M8.600 9.900c-3-.600-6.600.800-7 3.600-.300 2.600 2.700 3.900 5 1.600" fill="none" stroke="#e4e8ec" stroke-width="1.300"/><path d="M12.600 7.200c2.400-.800 4.900.200 4.900 1.800 0 1.400-1.900 2.100-3.800 1.500" fill="none" stroke="#e4e8ec" stroke-width="1.300"/></svg>
<div class="t tk" style="top:827.2px;line-height:16px;height:16px;left:1248.8px;width:400px;text-align:center;"><span id="t153" style="letter-spacing:-0.49px">13:27</span></div>
<div class="t tk" style="top:845.7px;line-height:16px;height:16px;left:1248.7px;width:400px;text-align:center;"><span id="t154" style="letter-spacing:-0.31px">08.12.2020</span></div>
<svg style="left:1494px;top:835px;" width="26" height="26" viewBox="0 0 26 26"><path d="M1.400 1.400h15.600v11.600h-9.400l-3.400 3.200v-3.200h-2.800z" fill="#fff"/><path d="M4 4.600h10.400M4 7h10.400M4 9.400h10.400" stroke="#7d8b98" stroke-width="1"/><circle cx="16.500" cy="16.500" r="7.300" fill="#1c2a37" stroke="#6f7d8a" stroke-width="1"/></svg>
<div class="t tk" style="top:843.7px;line-height:16px;height:16px;left:1310.6px;width:400px;text-align:center;font-weight:bold;font-size:11px"><span id="t155">6</span></div>
<div style="left:1531px;top:824px;width:1px;height:43px;background:#5d6b78"></div>
</div>
</body></html>
